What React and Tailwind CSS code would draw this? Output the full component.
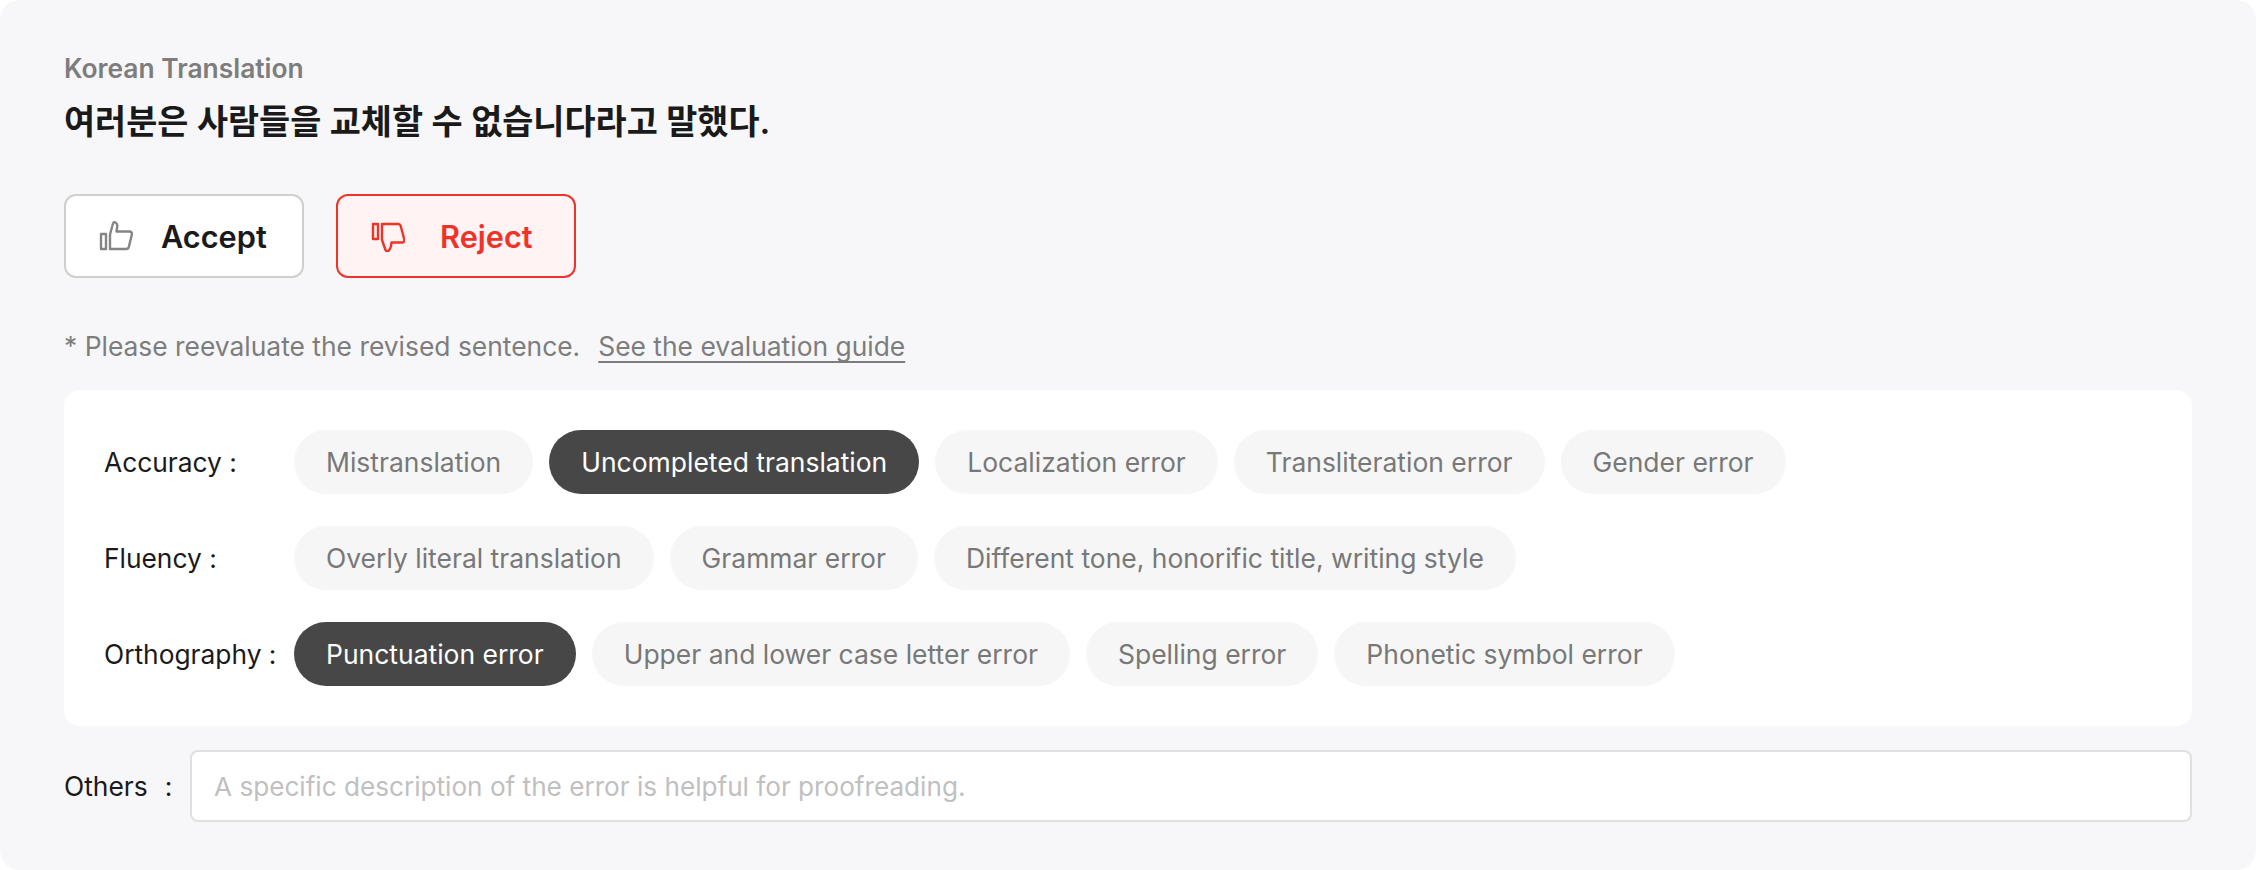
import React from "react";

const font = "font-['Inter','Noto_Sans_CJK_KR',sans-serif]";

const groups = [
  {
    label: "Accuracy :",
    items: [
      { text: "Mistranslation" },
      { text: "Uncompleted translation", active: true },
      { text: "Localization error" },
      { text: "Transliteration error" },
      { text: "Gender error" },
    ],
  },
  {
    label: "Fluency :",
    items: [
      { text: "Overly literal translation" },
      { text: "Grammar error" },
      { text: "Different tone, honorific title, writing style" },
    ],
  },
  {
    label: "Orthography :",
    items: [
      { text: "Punctuation error", active: true },
      { text: "Upper and lower case letter error" },
      { text: "Spelling error" },
      { text: "Phonetic symbol error" },
    ],
  },
];

function ThumbUp() {
  return (
    <svg width="34" height="32" viewBox="0 0 34 32" fill="none" stroke="#858585" strokeWidth="2.4" strokeLinejoin="round">
      <rect x="2" y="14" width="5" height="15" />
      <path d="M11 29V14.5L14 3.5C14.3 2 16 1.8 17 2.8C18.3 4 18.5 5.5 18.2 7L17.5 11.5H30.5C32.3 11.5 33.3 13 32.8 14.8L29.8 27C29.5 28.3 28.5 29 27.3 29H11Z" />
    </svg>
  );
}

function ThumbDown() {
  return (
    <svg width="34" height="32" viewBox="0 -2 34 32" fill="none" stroke="#f03329" strokeWidth="2.4" strokeLinejoin="round">
      <rect x="2" y="2" width="5" height="15" />
      <path d="M11 2V18L14.5 28C15 29.3 17 29.3 18 28.3C19.3 27 19.7 25.5 20 24L20.5 20.5H31C32.8 20.5 33.7 19 33.2 17.3L29.7 4C29.3 2.8 28.5 2 27.3 2H11Z" />
    </svg>
  );
}

function Chip({ text, active }) {
  return (
    <button
      className={`h-16 rounded-full px-8 pt-[2px] text-[26.47px] whitespace-nowrap ${
        active ? "bg-[#474747] text-white" : "bg-[#f6f6f6] text-[#787878]"
      }`}
    >
      {text}
    </button>
  );
}

export default function App() {
  return (
    <div className={`${font} bg-white`}>
      <div className="h-[870px] rounded-[20px] bg-[#f7f7f9] px-16 pt-[48px]">
        {/* HEADER */}
        <div className="text-[26.4px] leading-[40px] font-semibold text-[#7d7d7d]">Korean Translation</div>
        <div className="mt-[14px] text-[33.8px] leading-[40px] font-semibold text-[#1a1a1a]">
          여러분은 사람들을 교체할 수 없습니다라고 말했다.
        </div>

        {/* ACTIONS */}
        <div className="mt-[52px] flex gap-8">
          <button className="flex h-[84px] w-[240px] items-center gap-[28px] rounded-xl border-2 border-[#cfcfcf] bg-white pl-[33px] text-[30.7px] font-semibold text-[#1a1a1a]">
            <ThumbUp />
            <span className="pt-[2px]">Accept</span>
          </button>
          <button className="flex h-[84px] w-[240px] items-center gap-[35px] rounded-xl border-2 border-[#f03329] bg-[#fff3f3] pl-[33px] text-[30.7px] font-semibold text-[#f03329]">
            <ThumbDown />
            <span className="pt-[2px]">Reject</span>
          </button>
        </div>

        {/* NOTE */}
        <div className="mt-[48px] flex gap-[18px] text-[26.4px] leading-[40px] text-[#7d7d7d]">
          <span>* Please reevaluate the revised sentence.</span>
          <a className="underline underline-offset-[5px] [text-decoration-skip-ink:none]">See the evaluation guide</a>
        </div>

        {/* ERROR TYPES */}
        <div className="mt-6 flex flex-col gap-8 rounded-2xl bg-white px-10 py-10">
          {groups.map((group) => (
            <div key={group.label} className="flex items-center">
              <div className="w-[190px] shrink-0 pt-[2px] text-[26.35px] text-[#1a1a1a]">{group.label}</div>
              <div className="flex gap-4">
                {group.items.map((item) => (
                  <Chip key={item.text} text={item.text} active={item.active} />
                ))}
              </div>
            </div>
          ))}
        </div>

        {/* OTHERS */}
        <div className="mt-6 flex items-center">
          <div className="flex w-[126px] shrink-0 pt-[2px] text-[26.4px] text-[#1a1a1a]">
            <span>Others</span>
            <span className="ml-[17px]">:</span>
          </div>
          <input
            placeholder="A specific description of the error is helpful for proofreading."
            className="h-[72px] flex-1 rounded-lg border-2 border-[#e0e0e0] bg-white px-[22px] text-[26.15px] outline-none placeholder:text-[#c0c0c0]"
          />
        </div>
      </div>
    </div>
  );
}
